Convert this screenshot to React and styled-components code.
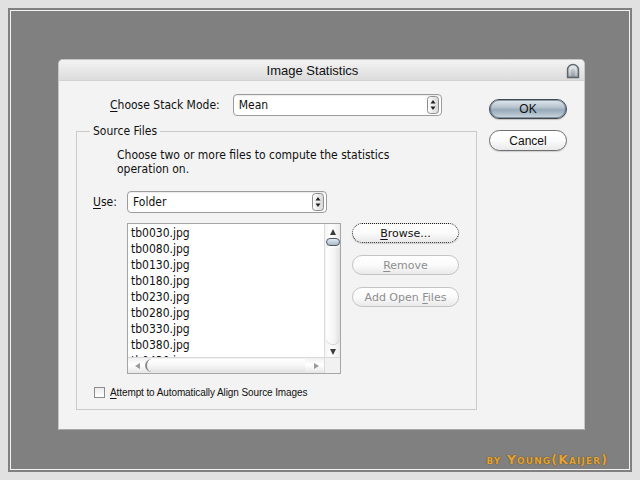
import React from "react";
import styled, { createGlobalStyle } from "styled-components";

const GlobalStyle = createGlobalStyle`
  html, body {
    margin: 0;
    padding: 0;
    background: #e1e1e1;
  }
  body {
    font-family: "DejaVu Sans Condensed", "DejaVu Sans", sans-serif;
    color: #111;
  }
`;

const Frame = styled.div`
  box-sizing: border-box;
  margin: 8px;
  width: 624px;
  height: 464px;
  background: #808080;
  box-shadow: inset 0 0 0 2px #808080, inset 0 0 0 3px #f2f2f2;
  padding: 51px 24px 0 50px;
  display: flex;
  flex-direction: column;
`;

const Dialog = styled.div`
  box-sizing: border-box;
  width: 527px;
  height: 371px;
  background: #f3f3f3;
  border: 1px solid #c6c6c6;
  border-bottom-color: #a8a8a8;
  border-radius: 5px 5px 0 0;
  display: flex;
  flex-direction: column;
`;

const TitleBar = styled.div`
  height: 20px;
  display: grid;
  grid-template-columns: 1fr auto 1fr;
  align-items: center;
  background: linear-gradient(#f3f3f3, #dcdcdc);
  border-bottom: 1px solid #d2d2d2;
  border-radius: 4px 4px 0 0;
  font-family: "Liberation Sans", Arial, sans-serif;
  font-size: 13px;
  color: #111;
`;

const TitleText = styled.div`
  grid-column: 2;
  margin-right: 18px;
`;

const CloseBox = styled.div`
  grid-column: 3;
  justify-self: end;
  display: flex;
  margin-right: 4px;
  margin-top: 2px;
`;

const Body = styled.div`
  display: flex;
  padding: 13px 17px 0 17px;
  gap: 12px;
`;

const LeftCol = styled.div`
  width: 401px;
  display: flex;
  flex-direction: column;
`;

const RightCol = styled.div`
  width: 78px;
  display: flex;
  flex-direction: column;
  gap: 11px;
  padding-top: 5px;
`;

const StackRow = styled.div`
  display: flex;
  align-items: center;
  gap: 13px;
  padding-left: 34px;
  font-size: 12px;
`;

const Key = styled.span`
  text-decoration: underline;
  text-underline-offset: 2px;
`;

const SelectBox = styled.div`
  box-sizing: border-box;
  width: ${(p) => p.$w}px;
  height: 22px;
  background: #fff;
  border: 1px solid #9c9c9c;
  border-radius: 4px;
  display: flex;
  align-items: center;
  justify-content: space-between;
  padding: 0 2px 0 5px;
  font-size: 12px;
  box-shadow: inset 0 1px 1px rgba(0, 0, 0, 0.08);
`;

const Group = styled.fieldset`
  margin: 8px 0 0 0;
  padding: 0 0 11px 0;
  border: 1px solid #cacaca;
  min-width: 0;
`;

const Legend = styled.legend`
  margin-left: 13px;
  padding: 0 3px;
  font-size: 12px;
  line-height: 14px;
`;

const Desc = styled.div`
  margin: 10px 0 0 40px;
  font-size: 12px;
  line-height: 14px;
`;

const UseRow = styled.div`
  margin-top: 15px;
  padding-left: 16px;
  display: flex;
  align-items: center;
  font-size: 12px;
`;

const UseLabel = styled.div`
  width: 34px;
  margin-top: -1px;
`;

const ListRow = styled.div`
  margin-top: 10px;
  padding-left: 50px;
  display: flex;
  align-items: flex-start;
  gap: 11px;
`;

const ListBox = styled.div`
  box-sizing: border-box;
  width: 214px;
  height: 151px;
  background: #fff;
  border: 1px solid #a6a6a6;
  display: grid;
  grid-template-columns: 1fr 16px;
  grid-template-rows: 1fr 16px;
  overflow: hidden;
`;

const Items = styled.div`
  padding: 1px 0 0 3px;
  overflow: hidden;
  font-size: 12px;
  line-height: 16px;
  color: #111;
`;

const VScroll = styled.div`
  display: flex;
  flex-direction: column;
  align-items: center;
  background: linear-gradient(to right, #f4f4f4, #ffffff 40%, #ececec);
  border-left: 1px solid #dcdcdc;
  padding-top: 3px;
`;

const Arrow = styled.div`
  width: 0;
  height: 0;
  border-left: 3px solid transparent;
  border-right: 3px solid transparent;
  ${(p) =>
    p.$dir === "up"
      ? "border-bottom: 6px solid #3c3c3c;"
      : "border-top: 6px solid #3c3c3c;"}
  margin: 2px 0;
`;

const HArrow = styled.div`
  width: 0;
  height: 0;
  border-top: 3px solid transparent;
  border-bottom: 3px solid transparent;
  ${(p) =>
    p.$dir === "left"
      ? "border-right: 5px solid #9a9a9a;"
      : "border-left: 5px solid #9a9a9a;"}
  margin: 0 3px;
`;

const VThumb = styled.div`
  box-sizing: border-box;
  width: 14px;
  height: 8px;
  border: 1.5px solid #4a5866;
  border-radius: 4px;
  background: linear-gradient(#e4ecf2, #a9bac8);
  margin-top: 1px;
`;

const VTrough = styled.div`
  box-sizing: border-box;
  flex: 1;
  width: 14px;
  margin: 2px 0 3px;
  border-radius: 0 0 7px 7px;
  background: linear-gradient(to right, #ffffff, #f4f4f4 60%, #e0e0e0);
  box-shadow: 0 1px 1px rgba(0, 0, 0, 0.18);
`;

const HScroll = styled.div`
  display: flex;
  align-items: center;
  padding: 0 2px 0 4px;
  background: linear-gradient(#f0f0f0, #ffffff 45%, #e6e6e6);
  border-top: 1px solid #d8d8d8;
`;

const HThumb = styled.div`
  box-sizing: border-box;
  flex: 1;
  height: 13px;
  margin: 0 6px 0 2px;
  border-left: 2px solid #8a8a8a;
  border-radius: 7px 0 0 7px;
  background: linear-gradient(#ffffff, #f6f6f6 50%, #e2e2e2);
`;

const Corner = styled.div`
  background: #f1f1f1;
  border-top: 1px solid #d8d8d8;
  border-left: 1px solid #dcdcdc;
`;

const SideButtons = styled.div`
  display: flex;
  flex-direction: column;
  gap: 12px;
`;

const Pill = styled.div`
  box-sizing: border-box;
  width: ${(p) => p.$w}px;
  height: ${(p) => p.$h || 20}px;
  border-radius: 11px;
  display: flex;
  align-items: center;
  justify-content: center;
  font-family: ${(p) =>
    p.$aqua
      ? '"Liberation Sans", Arial, sans-serif'
      : '"DejaVu Sans", Verdana, sans-serif'};
  font-size: ${(p) => (p.$aqua ? 12 : 11)}px;
  color: ${(p) => (p.$disabled ? "#8e8e8e" : "#111")};
  border: 1px ${(p) => (p.$focus ? "dotted" : "solid")}
    ${(p) =>
      p.$primary
        ? "#3f4a55"
        : p.$disabled
        ? "#c4c4c4"
        : p.$focus
        ? "#1a1a1a"
        : "#6f6f6f"};
  background: ${(p) =>
    p.$primary
      ? "linear-gradient(#e2e9ee 0%, #b7c4cf 40%, #97a9b8 55%, #b3c2ce 80%, #d0dbe3 100%)"
      : "linear-gradient(#ffffff 0%, #fbfbfb 50%, #e9e9e9 100%)"};
  box-shadow: ${(p) =>
    p.$primary
      ? "inset 0 0 0 1px rgba(60,75,90,0.5), 0 1px 1px rgba(0,0,0,0.2)"
      : p.$disabled
      ? "none"
      : "0 1px 1px rgba(0,0,0,0.15)"};
`;

const CheckRow = styled.div`
  margin-top: 13px;
  padding-left: 17px;
  display: flex;
  align-items: center;
  gap: 5px;
  font-family: "Liberation Sans", Arial, sans-serif;
  font-size: 10px;
  letter-spacing: -0.1px;
`;

const Check = styled.div`
  box-sizing: border-box;
  width: 11px;
  height: 11px;
  border: 1px solid #8c8c8c;
  background: linear-gradient(#ececec, #ffffff);
`;

const Signature = styled.div`
  align-self: flex-end;
  margin-top: 23px;
  font-family: "DejaVu Sans", sans-serif;
  font-weight: bold;
  font-size: 12.5px;
  line-height: 13px;
  font-variant: small-caps;
  letter-spacing: 1.1px;
  color: #e0a43c;
  text-shadow: 0 0 1px #6a4a18, 0 0 1px #6a4a18;
`;

function Stepper() {
  return (
    <svg width="12" height="18" viewBox="0 0 12 18">
      <defs>
        <linearGradient id="stp" x1="0" y1="0" x2="1" y2="0">
          <stop offset="0" stopColor="#ffffff" />
          <stop offset="1" stopColor="#d6d6d6" />
        </linearGradient>
      </defs>
      <rect x="0.5" y="0.5" width="11" height="17" rx="3" fill="url(#stp)" stroke="#8e8e8e" />
      <path d="M3.5 7.5 L6 4 L8.5 7.5 Z" fill="#222" />
      <path d="M3.5 10.5 L6 14 L8.5 10.5 Z" fill="#222" />
    </svg>
  );
}

function CloseIcon() {
  return (
    <svg width="14" height="16" viewBox="0 0 14 16">
      <defs>
        <linearGradient id="cls" x1="0" y1="0" x2="0" y2="1">
          <stop offset="0" stopColor="#eef1f3" />
          <stop offset="0.5" stopColor="#b9c0c6" />
          <stop offset="1" stopColor="#8c959d" />
        </linearGradient>
      </defs>
      <path d="M1.5 14.5 V7 A5.5 5.5 0 0 1 12.5 7 V14.5 Z" fill="url(#cls)" stroke="#5f666c" strokeWidth="1.4" />
      <path d="M4 13 V7.5 A3 3 0 0 1 10 7.5 V13" fill="none" stroke="#f5f7f8" strokeWidth="1" opacity="0.7" />
    </svg>
  );
}

const files = [
  "tb0030.jpg",
  "tb0080.jpg",
  "tb0130.jpg",
  "tb0180.jpg",
  "tb0230.jpg",
  "tb0280.jpg",
  "tb0330.jpg",
  "tb0380.jpg",
  "tb0430.jpg",
];

export default function App() {
  return (
    <>
      <GlobalStyle />
      <Frame>
        <Dialog>
          <TitleBar>
            <TitleText>Image Statistics</TitleText>
            <CloseBox>
              <CloseIcon />
            </CloseBox>
          </TitleBar>
          <Body>
            <LeftCol>
              <StackRow>
                <span>
                  <Key>C</Key>hoose Stack Mode:
                </span>
                <SelectBox $w={209}>
                  <span>Mean</span>
                  <Stepper />
                </SelectBox>
              </StackRow>
              <Group>
                <Legend>Source Files</Legend>
                <Desc>
                  Choose two or more files to compute the statistics
                  <br />
                  operation on.
                </Desc>
                <UseRow>
                  <UseLabel>
                    <Key>U</Key>se:
                  </UseLabel>
                  <SelectBox $w={200}>
                    <span>Folder</span>
                    <Stepper />
                  </SelectBox>
                </UseRow>
                <ListRow>
                  <ListBox>
                    <Items>
                      {files.map((f) => (
                        <div key={f}>{f}</div>
                      ))}
                    </Items>
                    <VScroll>
                      <Arrow $dir="up" />
                      <VThumb />
                      <VTrough />
                      <Arrow $dir="down" />
                    </VScroll>
                    <HScroll>
                      <HArrow $dir="left" />
                      <HThumb />
                      <HArrow $dir="right" />
                    </HScroll>
                    <Corner />
                  </ListBox>
                  <SideButtons>
                    <Pill $w={107} $focus>
                      <span>
                        <Key>B</Key>rowse...
                      </span>
                    </Pill>
                    <Pill $w={107} $disabled>
                      <span>
                        <Key>R</Key>emove
                      </span>
                    </Pill>
                    <Pill $w={107} $disabled>
                      <span>
                        Add Open <Key>F</Key>iles
                      </span>
                    </Pill>
                  </SideButtons>
                </ListRow>
                <CheckRow>
                  <Check />
                  <span>
                    <Key>A</Key>ttempt to Automatically Align Source Images
                  </span>
                </CheckRow>
              </Group>
            </LeftCol>
            <RightCol>
              <Pill $w={78} $h={20} $aqua $primary>
                OK
              </Pill>
              <Pill $w={78} $h={21} $aqua>
                Cancel
              </Pill>
            </RightCol>
          </Body>
        </Dialog>
        <Signature>by Young(Kaijer)</Signature>
      </Frame>
    </>
  );
}
